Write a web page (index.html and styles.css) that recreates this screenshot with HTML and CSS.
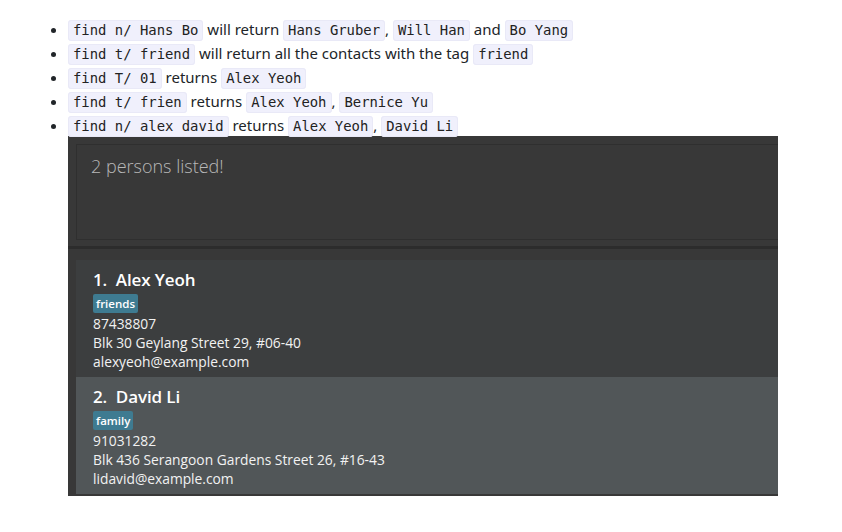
FILE: index.html
```html
<!DOCTYPE html>
<html>
<head>
<meta charset="utf-8">
<link rel="stylesheet" href="styles.css">
</head>
<body>
<ul class="examples">
  <li><code>find n/ Hans Bo</code> will return <code>Hans Gruber</code>, <code>Will Han</code> and <code>Bo Yang</code></li>
  <li><code>find t/ friend</code> will return all the contacts with the tag <code>friend</code></li>
  <li><code>find T/ 01</code> returns <code>Alex Yeoh</code></li>
  <li><code>find t/ frien</code> returns <code>Alex Yeoh</code>, <code>Bernice Yu</code></li>
  <li><code>find n/ alex david</code> returns <code>Alex Yeoh</code>, <code>David Li</code></li>
</ul>
<div class="shot">
  <div class="result">2 persons listed!</div>
  <div class="divider"></div>
  <div class="list">
    <div class="card odd">
      <div class="name">1.&nbsp;&nbsp;Alex Yeoh</div>
      <div class="tags"><span class="tag">friends</span></div>
      <div class="field">87438807</div>
      <div class="field">Blk 30 Geylang Street 29, #06-40</div>
      <div class="field">alexyeoh@example.com</div>
    </div>
    <div class="card even">
      <div class="name">2.&nbsp;&nbsp;David Li</div>
      <div class="tags"><span class="tag">family</span></div>
      <div class="field">91031282</div>
      <div class="field">Blk 436 Serangoon Gardens Street 26, #16-43</div>
      <div class="field">lidavid@example.com</div>
    </div>
  </div>
</div>
</body>
</html>
```
FILE: styles.css
```css
html, body {
  margin: 0;
  padding: 0;
  background: #ffffff;
}
body {
  font-family: "Noto Sans", "Open Sans", sans-serif;
  font-size: 15px;
  color: #212529;
}
.examples {
  margin: 0;
  padding: 17px 0 0 68px;
  list-style: disc;
}
.examples li {
  line-height: 24px;
  height: 24px;
}
.examples code {
  font-family: "DejaVu Sans Mono", monospace;
  font-size: 13.9px;
  background: #f0f0fc;
  border: 1px solid #e9e9f7;
  border-radius: 3px;
  padding: 1px 4px 2px;
  color: #222;
}
.shot {
  margin-left: 68px;
  margin-top: -1px;
  width: 710px;
  height: 360px;
  background: #383838;
  overflow: hidden;
  padding: 8px 0 0 8px;
  box-sizing: border-box;
}
.result {
  width: 720px;
  height: 96px;
  box-sizing: border-box;
  border: 1px solid #2f2f2f;
  padding: 8px 14px;
  font-family: "Open Sans", sans-serif;
  font-weight: 300;
  font-size: 18px;
  color: #b8b8b8;
  line-height: 26px;
}
.divider {
  height: 3px;
  margin: 6px 0 0 -8px;
  background: #2c2c2c;
}
.list {
  margin-top: 11px;
  width: 720px;
}
.card {
  height: 117px;
  box-sizing: border-box;
  padding: 9px 17px 0;
  color: #ffffff;
  font-family: "Open Sans", sans-serif;
}
.card.odd { background: #3c3e3f; }
.card.even { background: #515658; }
.name {
  font-size: 17px;
  font-weight: 600;
  line-height: 22px;
  letter-spacing: -0.1px;
}
.tags {
  margin-top: 3px;
  height: 19px;
  display: flex;
}
.tag {
  background: #3e7b91;
  color: #ffffff;
  font-size: 11.5px;
  font-weight: 600;
  line-height: 19px;
  padding: 0 3px;
  border-radius: 2px;
}
.field {
  font-size: 13.8px;
  line-height: 19px;
  color: #f2f2f2;
  position: relative;
  top: 1px;
}
```
